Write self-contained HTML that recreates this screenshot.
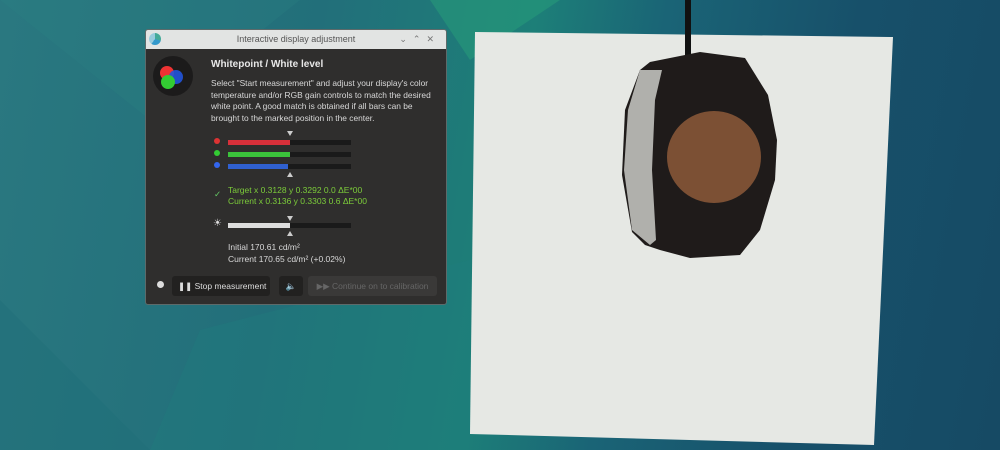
<!DOCTYPE html>
<html><head><style>
body{margin:0;width:1000px;height:450px;overflow:hidden;position:relative;font-family:"Liberation Sans",sans-serif;
background:linear-gradient(100deg,#2a7880 0%,#226f7a 30%,#1d7f78 50%,#1a6476 62%,#17506a 80%,#164a64 100%);}
.dlg{position:absolute;left:145px;top:29px;width:300px;height:274px;background:#2f2e2d;border:1px solid #5d6a6a;border-radius:3px;overflow:hidden;color:#d8d8d8;font-size:8.5px}
.tb{height:19px;background:#e2e4e3;color:#555;font-size:9px;text-align:center;line-height:19px;position:relative}
.t{position:absolute}
.bar{position:absolute;left:82px;width:123px;height:5px;background:#1a1a1a}
.bar i{display:block;height:100%;width:62px}
.dot{position:absolute;left:68px;width:6px;height:6px;border-radius:50%}
.tri{position:absolute;width:0;height:0;border-left:3px solid transparent;border-right:3px solid transparent}
.btn{position:absolute;top:246px;height:20px;background:#222120;border-radius:3px;line-height:20px;font-size:8.5px}
</style></head><body>
<svg width="1000" height="450" style="position:absolute;left:0;top:0">
<polygon points="0,0 300,0 150,120" fill="#2d8583" opacity=".25"/>
<polygon points="430,0 560,0 470,60" fill="#27a07a" opacity=".5"/>
<polygon points="200,330 470,260 470,450 150,450" fill="#1f7f7f" opacity=".35"/>
<polygon points="0,300 150,450 0,450" fill="#1d6f78" opacity=".4"/>
<polygon points="475,32 893,37 874,445 470,434" fill="#e6e8e4"/>
<line x1="688" y1="0" x2="688" y2="56" stroke="#111" stroke-width="6"/>
<path d="M650,62 L640,70 L625,110 L622,175 L632,232 L645,245 L660,250 L690,258 L740,255 L760,230 L775,180 L777,140 L768,95 L745,58 L700,52 Z" fill="#1f1b1a"/>
<path d="M640,70 L628,110 L624,170 L632,230 L650,245 L656,240 L652,170 L655,100 L662,70 Z" fill="#b0b0ac"/>
<ellipse cx="714" cy="157" rx="47" ry="46" fill="#7c5034"/>
</svg>
<div class="dlg">
<div class="tb"><span style="position:absolute;left:3px;top:3px;width:12px;height:12px;border-radius:50%;background:conic-gradient(#4a9 0 30%,#39c 30% 60%,#9cd 60%)"></span>Interactive display adjustment<span style="position:absolute;right:6px;top:0;letter-spacing:6px;color:#777">⌄⌃✕</span></div>
<div class="t" style="left:7px;top:26px;width:40px;height:40px;border-radius:50%;background:#1c1b1b"></div>
<div class="t" style="left:14px;top:36px;width:14px;height:14px;border-radius:50%;background:#e33"></div>
<div class="t" style="left:23px;top:40px;width:14px;height:14px;border-radius:50%;background:#25d;opacity:.9"></div>
<div class="t" style="left:15px;top:45px;width:14px;height:14px;border-radius:50%;background:#3c3"></div>
<div class="t" style="left:65px;top:29px;font-weight:bold;font-size:10px;color:#e8e8e8">Whitepoint / White level</div>
<div class="t" style="left:65px;top:48px;width:222px;line-height:11.5px;font-size:8.4px">Select "Start measurement" and adjust your display's color temperature and/or RGB gain controls to match the desired white point. A good match is obtained if all bars can be brought to the marked position in the center.</div>
<div class="tri" style="left:141px;top:101px;border-top:5px solid #ccc"></div>
<div class="dot" style="top:108px;background:#d33"></div><div class="bar" style="top:110px"><i style="background:#d8303a"></i></div>
<div class="dot" style="top:120px;background:#3c3"></div><div class="bar" style="top:122px"><i style="background:#3bc23b"></i></div>
<div class="dot" style="top:132px;background:#36e"></div><div class="bar" style="top:134px"><i style="background:#3060d0;width:60px"></i></div>
<div class="tri" style="left:141px;top:142px;border-bottom:5px solid #ccc"></div>
<div class="t" style="left:68px;top:159px;color:#6c6">✓</div>
<div class="t" style="left:82px;top:155px;color:#7ccc3a;font-size:8.5px;line-height:11px">Target x 0.3128 y 0.3292 0.0 ΔE*00<br>Current x 0.3136 y 0.3303 0.6 ΔE*00</div>
<div class="tri" style="left:141px;top:186px;border-top:5px solid #ccc"></div>
<div class="t" style="left:67px;top:188px;font-size:10px;color:#ddd">☀</div>
<div class="bar" style="top:193px"><i style="background:#ddd"></i></div>
<div class="tri" style="left:141px;top:201px;border-bottom:5px solid #ccc"></div>
<div class="t" style="left:82px;top:211px;line-height:12px;font-size:8.5px">Initial 170.61 cd/m²<br>Current 170.65 cd/m² (+0.02%)</div>
<div class="t" style="left:11px;top:251px;width:7px;height:7px;border-radius:50%;background:#ddd"></div>
<div class="btn" style="left:26px;width:98px;color:#ddd;padding-left:6px;box-sizing:border-box">❚❚ Stop measurement</div>
<div class="btn" style="left:133px;width:24px;text-align:center">🔈</div>
<div class="btn" style="left:162px;width:129px;background:#3a3938;color:#666;text-align:center">▶▶ Continue on to calibration</div>
</div>
</body></html>
